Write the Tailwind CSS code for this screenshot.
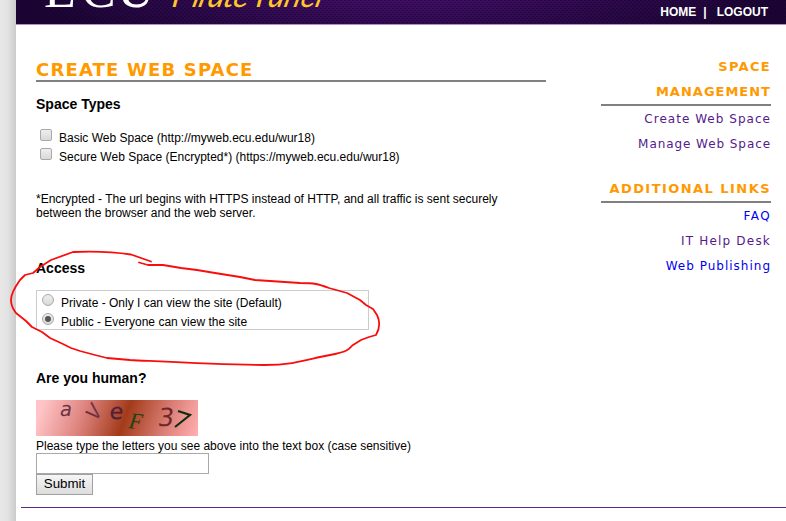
<!DOCTYPE html>
<html lang="en"><head><meta charset="utf-8"><title>Create Web Space</title>
<script src="https://cdn.jsdelivr.net/npm/@tailwindcss/browser@4"></script></head>
<body class="w-[786px] h-[521px] overflow-hidden bg-white font-['Liberation_Sans',Arial,sans-serif] text-[12px] leading-[14px] text-black">
<div class="relative flex h-[521px]">
<div class="w-4 shrink-0 bg-linear-to-r from-[#e8e8e8] via-[#e2e2e2] to-[#cbcbcb]"></div>
<div class="flex-1 flex flex-col">
<header class="h-[25px] shrink-0 flex justify-between border-b border-[#b98ac8] bg-[radial-gradient(ellipse_370px_70px_at_50%_-12px,#48106f,#1c0535)] overflow-hidden">
<svg class="block" width="770" height="24" viewBox="16 0 770 24">
<defs><pattern id="mesh" width="4" height="4" patternUnits="userSpaceOnUse"><path d="M0 0h2v1h-2zM2 2h2v1h-2z" fill="#08001a" opacity=".35"/></pattern></defs>
<rect x="16" width="770" height="24" fill="url(#mesh)"/>
<g fill="#fff" font-family="Liberation Serif, serif" font-size="52"><text x="44" y="6.500">E</text><text x="81" y="6.500">C</text><text x="117" y="6.500">U</text></g>
<g fill="#ffc62a" font-family="Lato, sans-serif" font-style="italic" font-size="32"><text transform="translate(171 7) skewX(-8)">P</text><text transform="translate(191 7) skewX(-14)" textLength="56" lengthAdjust="spacing">irate</text><text transform="translate(255 7) skewX(-8)">P</text><text transform="translate(267 7) skewX(-14)" textLength="54" lengthAdjust="spacingAndGlyphs">anel</text></g>
</svg>
<nav class="flex shrink-0 -ml-[130px] pt-[5px] pr-[18px] text-white font-bold whitespace-pre"><a>HOME</a><span class="ml-[7px] mr-[10px]">|</span><a>LOGOUT</a></nav>
</header>
<div class="flex justify-between pl-5 pr-[15px] h-[482px] shrink-0">
<main class="w-[510px]">
<h1 class="mt-[34px] h-[23px] border-b-2 border-[#808080] font-['DejaVu_Sans',Verdana,sans-serif] font-bold text-[18px] leading-[21px] tracking-[1.17px] text-[#ff9900] whitespace-nowrap">CREATE WEB SPACE</h1>
<h2 class="mt-[14px] font-bold text-[14px] leading-4">Space Types</h2>
<div class="mt-4 ml-1">
<label class="flex h-[19px]"><span class="mt-px w-3 h-3 rounded-[2px] border border-[#a9a9a9] bg-linear-to-b from-[#eee] to-[#d9d9d9]"></span><span class="ml-[7px] mt-[3px]">Basic Web Space (http://myweb.ecu.edu/wur18)</span></label>
<label class="flex h-[19px]"><span class="mt-px w-3 h-3 rounded-[2px] border border-[#a9a9a9] bg-linear-to-b from-[#eee] to-[#d9d9d9]"></span><span class="ml-[7px] mt-[3px]">Secure Web Space (Encrypted*) (https://myweb.ecu.edu/wur18)</span></label>
</div>
<p class="mt-[26px] whitespace-nowrap">*Encrypted - The url begins with HTTPS instead of HTTP, and all traffic is sent securely<br>between the browser and the web server.</p>
<h2 class="mt-10 font-bold text-[14px] leading-4">Access</h2>
<div class="mt-[14px] w-[333px] h-10 border border-[#ccc] pl-[5px] pt-[2px]">
<label class="flex h-[19px]"><span class="mt-px w-3 h-3 rounded-full border border-[#a9a9a9] bg-linear-to-b from-[#eee] to-[#d9d9d9]"></span><span class="ml-[7px] mt-[3px]">Private - Only I can view the site (Default)</span></label>
<label class="flex h-[19px]"><span class="mt-px w-3 h-3 rounded-full border border-[#a9a9a9] bg-linear-to-b from-[#eee] to-[#d9d9d9] flex items-center justify-center"><i class="w-[6px] h-[6px] rounded-full bg-[#555]"></i></span><span class="ml-[7px] mt-[3px]">Public - Everyone can view the site</span></label>
</div>
<h2 class="mt-10 font-bold text-[14px] leading-4">Are you human?</h2>
<svg class="block mt-[14px]" width="162" height="36">
<defs><linearGradient id="cap" gradientUnits="userSpaceOnUse" x1="11" y1="-8" x2="157" y2="44"><stop stop-color="#ffc4c7"/><stop offset=".26" stop-color="#df8580"/><stop offset=".53" stop-color="#a33b1a"/><stop offset=".8" stop-color="#dc8078"/><stop offset="1" stop-color="#ffadaf"/></linearGradient></defs>
<rect width="162" height="36" fill="url(#cap)"/>
<g font-family="DejaVu Sans, sans-serif">
<text transform="translate(23 16) skewX(-10)" font-size="20" font-family="DejaVu Sans Mono, monospace" fill="#693445">a</text>
<text transform="translate(58 12) rotate(-60) skewX(-14)" x="-7" y="7" font-size="22" font-family="Liberation Mono, monospace" fill="#71304a">V</text>
<text transform="translate(73 19) skewX(-6)" font-size="22" fill="#512038" stroke="#512038" stroke-width=".3">e</text>
<text transform="translate(91 28) rotate(6) skewX(-12)" font-size="23" font-family="Liberation Serif, serif" fill="#26400f">F</text>
<text transform="translate(121 26) skewX(-8)" font-size="25" fill="#6d2828">3</text>
</g><path d="M142 11L154 15L139 27" fill="none" stroke="#102c10" stroke-width="2.2"/>
</svg>
<p class="mt-[3px]">Please type the letters you see above into the text box (case sensitive)</p>
<div class="w-[173px] h-[21px] border border-[#a9a9a9]"></div>
<button class="block w-[57px] h-[21px] border border-[#a0a0a0] bg-linear-to-b from-[#f6f6f6] to-[#ddd] text-[13.33px] leading-[18px] pb-px">Submit</button>
</main>
<aside class="w-[170px] pt-[29px] text-right font-['DejaVu_Sans',Verdana,sans-serif] text-[12px] leading-[25px] tracking-[1.1px] text-[#551a8b] whitespace-nowrap">
<h3 class="h-[52px] border-b-2 border-[#808080] text-[13px] font-bold tracking-[1px] text-[#ff9900]"><span class="tracking-[1.3px]">SPACE</span><br>MANAGEMENT</h3>
<a class="block pt-px h-[25px] tracking-[1.03px]">Create Web Space</a><a class="block pt-px h-[25px] tracking-[0.93px]">Manage Web Space</a>
<h3 class="mt-5 h-[27px] border-b-2 border-[#808080] text-[13px] font-bold tracking-[1.45px] text-[#ff9900]">ADDITIONAL LINKS</h3>
<a class="block pt-px h-[25px] text-[#0000ee] tracking-[1.4px]">FAQ</a><a class="block pt-px h-[25px] tracking-[1.2px]">IT Help Desk</a><a class="block pt-px h-[25px] text-[#0000ee] tracking-[1px]">Web Publishing</a>
</aside>
</div>
<div class="ml-[5px] h-px shrink-0 bg-[#592a8a]"></div>
</div>
<svg class="absolute left-0 top-0" width="786" height="521" fill="none" stroke="#fa0c0c" stroke-width="1.8" stroke-linejoin="round" stroke-linecap="round"><path d="M151 261.500L131 254.500C118 252.500 95 251 73 252L51 260L40 267L33 273L25 275L20 280C15 287 11 293 11 300C11 307 14 310 16 313L26 321L32 327L42 332L50 338L63 344L71 348L80 351L95 355L107 358L130 360C170 362 220 365 264 365C290 365 303 361 320 357L335 354C350 351 349 348 353 345L361 340L369 337L376 335C380 328 380 321 377 315L373 309L366 305L360 300L347 293L329 288C318 284 315 283 300 283L255 280L240 277L215 273L197 270L181 268L163 265L148 265L139 262.500"/></svg>
</div></body></html>
